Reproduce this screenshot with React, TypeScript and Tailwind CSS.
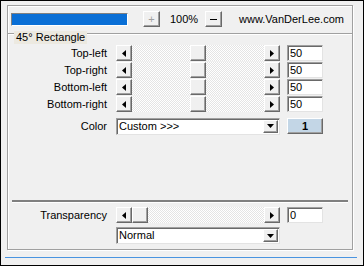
import * as React from "react";

const btn =
  "bg-[#f0f0f0] border border-t-white border-l-white border-r-[#696969] border-b-[#696969] shadow-[inset_-1px_-1px_0_#a0a0a0]";
const sunken =
  "bg-white border border-t-[#a0a0a0] border-l-[#a0a0a0] border-r-[#e3e3e3] border-b-[#e3e3e3] shadow-[inset_1px_1px_0_#696969]";

function Arrow({ dir }: { dir: "left" | "right" | "down" }) {
  if (dir === "down")
    return (
      <svg width="7" height="4" viewBox="0 0 7 4">
        <path d="M0 0h7L3.5 4z" fill="#000" />
      </svg>
    );
  return (
    <svg width="4" height="7" viewBox="0 0 4 7">
      <path d={dir === "left" ? "M4 0v7L0 3.5z" : "M0 0v7l4-3.5z"} fill="#000" />
    </svg>
  );
}

function ArrowBtn({ dir }: { dir: "left" | "right" }) {
  return (
    <div className={`flex h-[16px] w-[16px] shrink-0 items-center justify-center ${btn}`}>
      <Arrow dir={dir} />
    </div>
  );
}

function Slider({ value }: { value: number }) {
  const free = 164 - 32 - 16;
  return (
    <div className="flex h-[16px] w-[164px]">
      <ArrowBtn dir="left" />
      <div className="relative flex-1 bg-[repeating-conic-gradient(#e4e4e4_0%_25%,#ffffff_0%_50%)] bg-[length:2px_2px]">
        <div
          className={`absolute top-0 h-[16px] w-[16px] ${btn}`}
          style={{ left: Math.round((value / 100) * free) }}
        />
      </div>
      <ArrowBtn dir="right" />
    </div>
  );
}

function Combo({ text }: { text: string }) {
  return (
    <div className={`flex h-[17px] w-[164px] items-center justify-between pl-[2px] pr-[1px] ${sunken}`}>
      <span className="leading-none">{text}</span>
      <div className={`flex h-[13px] w-[15px] items-center justify-center ${btn}`}>
        <Arrow dir="down" />
      </div>
    </div>
  );
}

function NumBox({ value }: { value: string }) {
  return (
    <div className={`flex h-[16px] w-[36px] items-center pl-[2px] ${sunken}`}>
      <span className="leading-none">{value}</span>
    </div>
  );
}

function Row({ label, children }: { label: string; children: React.ReactNode }) {
  return (
    <div className="flex h-[16px] items-center">
      <div className="w-[100px] pr-px text-right">{label}</div>
      <div className="ml-[8px] flex items-center gap-[7px]">{children}</div>
    </div>
  );
}

const corners = [
  { label: "Top-left", value: 50 },
  { label: "Top-right", value: 50 },
  { label: "Bottom-left", value: 50 },
  { label: "Bottom-right", value: 50 },
];

export default function App() {
  return (
    <div className="h-[266px] w-[364px] overflow-hidden border border-black bg-[#f0f0f0] font-['Liberation_Sans',Arial,sans-serif] text-[11px] leading-[13px] text-black">
      <div className="ml-[6px] mt-[4px] flex h-[245px] w-[346px] flex-col border border-[#a0a0a0] shadow-[inset_1px_1px_0_#fff,1px_1px_0_#fff]">
        {/* top bar */}
        <div className="mt-[5px] flex h-[16px] items-center pl-[3px]">
          <div className="h-[13px] w-[117px] border border-t-[#808080] border-l-[#808080] border-r-white border-b-white bg-[#0a6fd6]" />
          <div className={`ml-[15px] flex h-[16px] w-[17px] items-center justify-center text-[#a0a0a0] ${btn}`}>+</div>
          <div className="ml-[10px] w-[25px]">100%</div>
          <div className={`ml-[10px] flex h-[16px] w-[17px] items-center justify-center ${btn}`}>
            <div className="h-px w-[7px] bg-black" />
          </div>
          <div className="ml-[17px]">www.VanDerLee.com</div>
        </div>

        {/* group line */}
        <div className="relative mt-[6px] h-[2px] border-t border-[#a0a0a0] bg-white">
          <div className="absolute left-[6px] top-[-3px] bg-[#ece9e0] px-[2px] leading-[13px]">45° Rectangle</div>
        </div>

        <div className="mt-[10px] flex flex-col gap-px">
          {corners.map((c) => (
            <Row key={c.label} label={c.label}>
              <Slider value={c.value} />
              <NumBox value={String(c.value)} />
            </Row>
          ))}
        </div>

        <div className="mt-[6px]">
          <Row label="Color">
            <Combo text="Custom >>>" />
            <div className={`flex h-[16px] w-[36px] items-center justify-center bg-[#c3d6e6] font-bold ${btn} !bg-[#c3d6e6]`}>1</div>
          </Row>
        </div>

        <div className="flex-1" />

        <div className="ml-[4px] mr-[4px] h-[3px] border-t-2 border-[#808080] bg-white" />

        <div className="mt-[4px]">
          <Row label="Transparency">
            <Slider value={0} />
            <NumBox value="0" />
          </Row>
        </div>
        <div className="ml-[108px] mt-[4px] mb-[5px]">
          <Combo text="Normal" />
        </div>
      </div>
      <div className="ml-[4px] mt-[7px] h-px w-[352px] bg-[#4a94e0]" />
    </div>
  );
}
